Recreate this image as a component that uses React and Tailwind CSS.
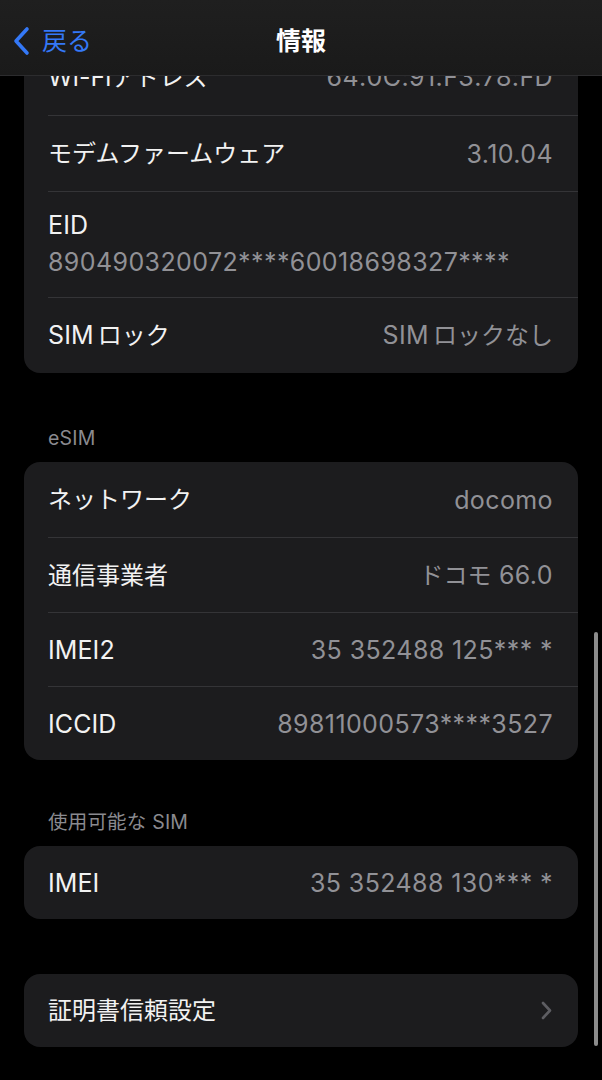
import React from "react";

const FONT = { fontFamily: 'Inter, "Noto Sans CJK JP", sans-serif' };

function J({ children, className = "" }) {
  return <span className={"text-[24px] tracking-[0px] " + className}>{children}</span>;
}

function Row({ label, value, first, h, chevron }) {
  return (
    <div className="pl-[24px]">
      <div
        className={
          "flex items-center justify-between pr-[25px] " +
          (first ? "" : "border-t border-[#343437]")
        }
        style={{ height: h }}
      >
        <span className="text-[25px] tracking-[0.1px] text-[#f2f2f2] leading-[30px]">{label}</span>
        {value && <span className="text-[25px] tracking-[0.4px] text-[#919196] leading-[30px]">{value}</span>}
        {chevron && (
          <svg width="11" height="19" viewBox="0 0 11 19" className="mr-[1px]">
            <path d="M2 2 L9 9.5 L2 17" fill="none" stroke="#5d5d62" strokeWidth="2.6" strokeLinecap="round" strokeLinejoin="round" />
          </svg>
        )}
      </div>
    </div>
  );
}

function Card({ children }) {
  return <div className="mx-[24px] rounded-[16px] bg-[#1c1c1e] overflow-hidden">{children}</div>;
}

function SectionHeader({ children, h }) {
  return (
    <div className="flex items-end px-[48px] pb-[12px]" style={{ height: h }}>
      <span className="text-[19.5px] tracking-[0.2px] leading-[24px] text-[#8a8a8f]">{children}</span>
    </div>
  );
}

export default function App() {
  return (
    <div className="relative h-[1080px] w-[602px] overflow-hidden bg-black" style={FONT}>
      <div className="flex flex-col pt-[39px]">
        <Card>
          <Row first h="76px" label={<>Wi-Fi<J>アドレス</J></>} value="64:0C:91:F3:78:FD" />
          <Row h="76px" label={<J>モデムファームウェア</J>} value="3.10.04" />
          <div className="pl-[24px]">
            <div className="flex h-[106px] flex-col justify-center gap-[7px] border-t border-[#343437] pr-[25px] pb-[3px]">
              <span className="text-[25px] tracking-[0.1px] leading-[30px] text-[#f2f2f2]">EID</span>
              <span className="text-[25px] tracking-[0.4px] leading-[30px] text-[#919196]">890490320072****60018698327****</span>
            </div>
          </div>
          <Row h="76px" label={<>SIM<J className="ml-[4px]">ロック</J></>} value={<>SIM<J className="ml-[4px]">ロックなし</J></>} />
        </Card>

        <SectionHeader h="89px">eSIM</SectionHeader>
        <Card>
          <Row first h="75px" label={<J>ネットワーク</J>} value="docomo" />
          <Row h="75px" label={<J>通信事業者</J>} value={<><J>ドコモ</J> 66.0</>} />
          <Row h="74px" label="IMEI2" value="35 352488 125*** *" />
          <Row h="74px" label="ICCID" value="89811000573****3527" />
        </Card>

        <SectionHeader h="86px">使用可能な SIM</SectionHeader>
        <Card>
          <Row first h="73px" label="IMEI" value="35 352488 130*** *" />
        </Card>

        <div className="h-[55px]" />
        <Card>
          <Row first h="73px" label={<J>証明書信頼設定</J>} chevron />
        </Card>
      </div>

      {/* Navigation bar overlay */}
      <div className="absolute left-0 top-0 flex h-[76px] w-full items-center border-b border-[#2c2c2e] bg-gradient-to-b from-[#1f1f1f] to-[#1a1a1a] pt-[6px]">
        <div className="flex items-center pl-[12px]">
          <svg width="20" height="30" viewBox="0 0 20 30">
            <path d="M15 3 L4 15 L15 27" fill="none" stroke="#3478f6" strokeWidth="3.6" strokeLinecap="round" strokeLinejoin="round" />
          </svg>
          <span className="ml-[10px] text-[25px] leading-[30px] text-[#3478f6]">戻る</span>
        </div>
        <div className="absolute left-0 right-0 top-[6px] bottom-0 flex items-center justify-center">
          <span className="text-[25px] font-bold leading-[30px] text-white">情報</span>
        </div>
      </div>

      {/* scroll indicator */}
      <div className="absolute right-[4px] top-[632px] h-[414px] w-[4px] rounded-full bg-[#8c8c8c]" />
    </div>
  );
}
